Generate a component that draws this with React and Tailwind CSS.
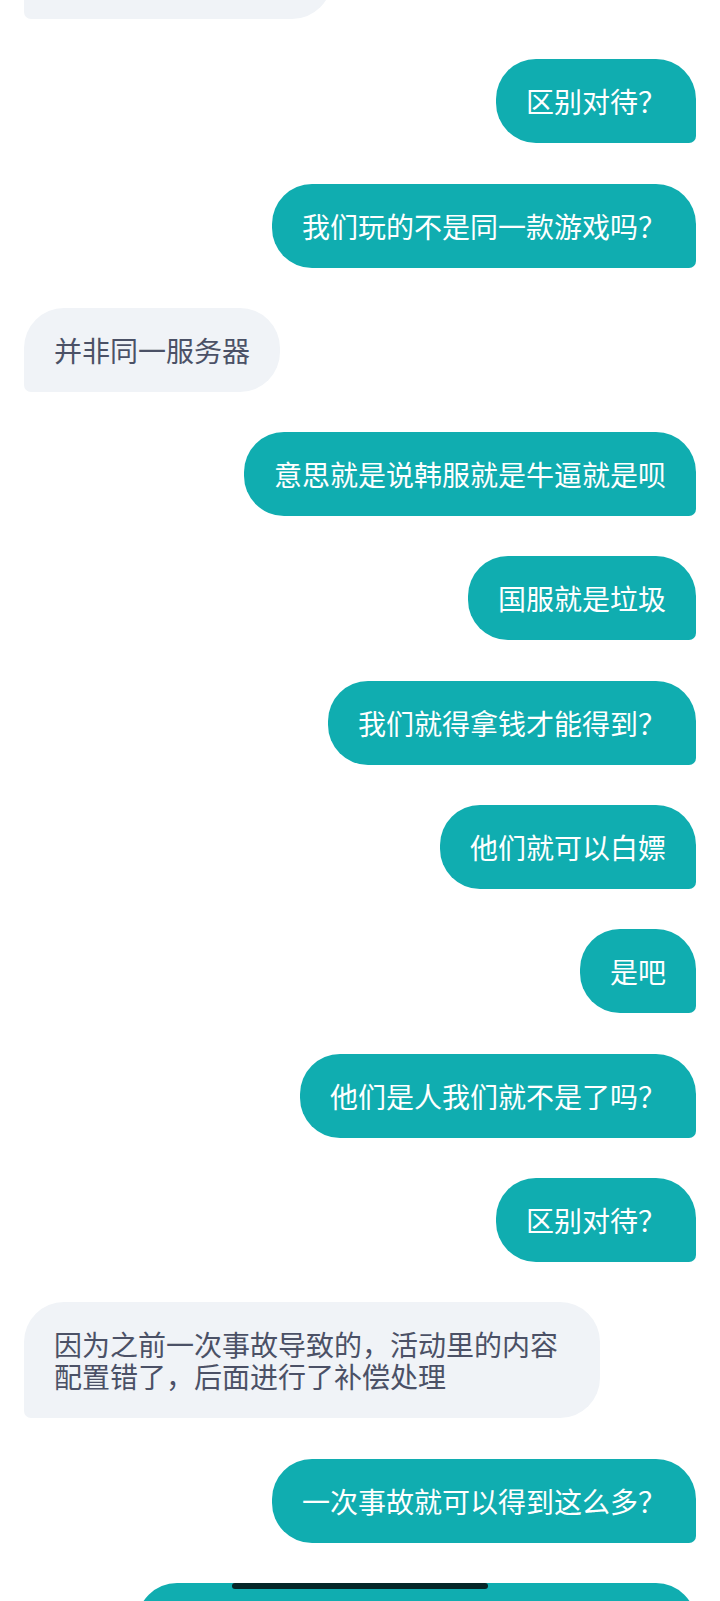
import React from 'react'

const messages = [
  { me: true, text: '区别对待？' },
  { me: true, text: '我们玩的不是同一款游戏吗？' },
  { me: false, text: '并非同一服务器' },
  { me: true, text: '意思就是说韩服就是牛逼就是呗' },
  { me: true, text: '国服就是垃圾' },
  { me: true, text: '我们就得拿钱才能得到？' },
  { me: true, text: '他们就可以白嫖' },
  { me: true, text: '是吧' },
  { me: true, text: '他们是人我们就不是了吗？' },
  { me: true, text: '区别对待？' },
  { me: false, text: '因为之前一次事故导致的，活动里的内容配置错了，后面进行了补偿处理' },
  { me: true, text: '一次事故就可以得到这么多？' },
]

function Bubble({ me, text }) {
  if (me) {
    return (
      <div className="flex justify-end">
        <div className="max-w-[576px] rounded-[40px] rounded-br-[7px] bg-[#10adb0] px-[30px] py-[26px] text-[28px] leading-[32px] text-white">
          {text}
        </div>
      </div>
    )
  }
  return (
    <div className="flex justify-start">
      <div className="max-w-[576px] rounded-[40px] rounded-bl-[7px] bg-[#f0f3f7] px-[30px] py-[26px] text-[28px] leading-[32px] text-[#4b5166]">
        {text}
      </div>
    </div>
  )
}

export default function App() {
  return (
    <div
      className="relative h-[1601px] w-[720px] overflow-hidden bg-white"
      style={{ fontFamily: '"Noto Sans CJK SC", "Noto Sans", sans-serif' }}
    >
      <div className="flex flex-col gap-[40.3px] px-6">
        {/* tail of the previous message, scrolled mostly out of view */}
        <div className="-mt-[81px] h-[100px] w-[308px] rounded-[40px] rounded-bl-[7px] bg-[#f0f3f7]" />
        {messages.map((m, i) => (
          <Bubble key={i} me={m.me} text={m.text} />
        ))}
        {/* next outgoing message, only its top edge is on screen */}
        <div className="flex justify-end">
          <div className="h-[84px] w-[559px] rounded-[40px] rounded-br-[7px] bg-[#10adb0]" />
        </div>
      </div>

      {/* home indicator */}
      <div className="absolute left-[232px] top-[1583px] h-[6px] w-[256px] rounded-full bg-[#062628]" />
    </div>
  )
}
